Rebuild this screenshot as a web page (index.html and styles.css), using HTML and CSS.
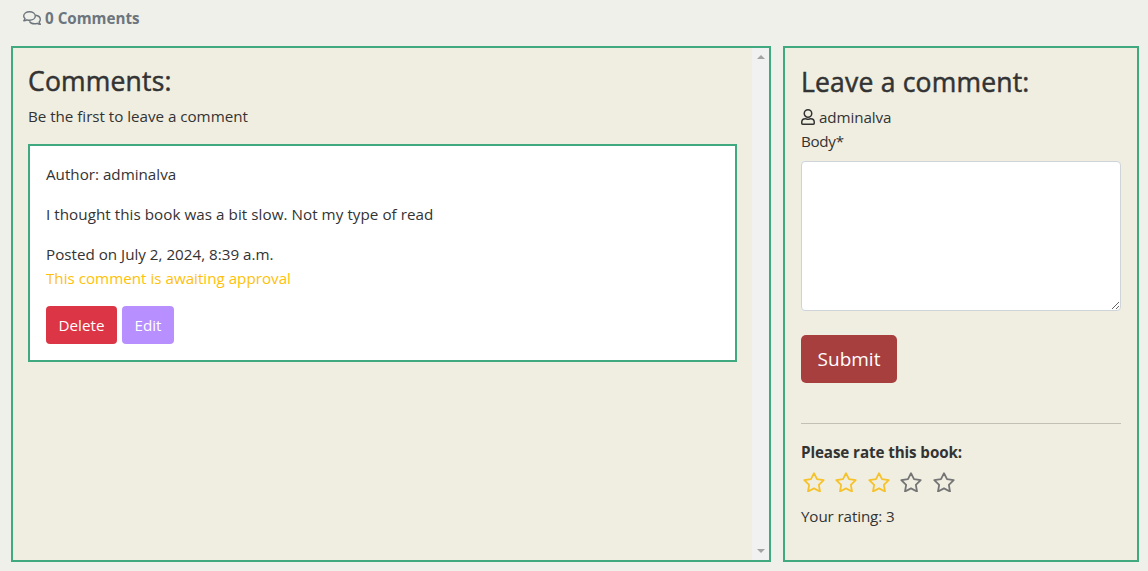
FILE: index.html
```html
<!DOCTYPE html>
<html lang="en">
<head>
<meta charset="utf-8">
<title>Comments</title>
<link rel="stylesheet" href="styles.css">
</head>
<body>
<svg class="defs" aria-hidden="true">
  <symbol id="star" viewBox="0 0 22 20"><path d="M11 1.200l3 6 6.700 1-4.850 4.700 1.150 6.600-6-3.100-6 3.100 1.150-6.600L1.300 8.200l6.700-1z" fill="none" stroke="currentColor" stroke-width="1.800" stroke-linejoin="round"/></symbol>
</svg>
<header class="count">
  <svg class="icon-comments" viewBox="0 0 18 14"><g fill="none" stroke="currentColor" stroke-width="1.400" stroke-linejoin="round"><path d="M6.500.7C9.800.7 12.300 2.600 12.300 5S9.800 9.300 6.500 9.300c-.9 0-1.800-.2-2.600-.5-.9.6-1.900.9-3.100.9.600-.7 1-1.400 1.200-2.200C1.100 6.800.7 5.900.7 5 .7 2.600 3.200.7 6.500.7z"/><path d="M12.500 4.200c2.700.3 4.800 2 4.800 4.300 0 .9-.4 1.800-1.200 2.500.2.800.6 1.500 1.200 2.200-1.200 0-2.200-.3-3.100-.9-.8.300-1.700.5-2.600.5-2.300 0-4.300-1-5.200-2.500"/></g></svg>
  <span class="count-text">0 Comments</span>
</header>
<main class="columns">
  <section class="panel comments">
    <div class="comments-body">
      <h3 class="title">Comments:</h3>
      <p class="intro">Be the first to leave a comment</p>
      <article class="card">
        <p class="para author">Author: adminalva</p>
        <p class="para text">I thought this book was a bit slow. Not my type of read</p>
        <p class="line posted">Posted on July 2, 2024, 8:39 a.m.</p>
        <p class="para awaiting">This comment is awaiting approval</p>
        <div class="actions">
          <button class="btn delete">Delete</button>
          <button class="btn edit">Edit</button>
        </div>
      </article>
    </div>
    <div class="scrollbar"><span class="arrow up"></span><span class="arrow down"></span></div>
  </section>
  <section class="panel form">
    <h3 class="title">Leave a comment:</h3>
    <p class="line user"><svg class="icon-user" viewBox="0 0 14 16"><g fill="none" stroke="currentColor" stroke-width="1.500"><circle cx="7" cy="4.500" r="3.750"/><path d="M4.300 9.700c1 0 1.400.5 2.700.5s1.700-.5 2.700-.5c2 0 3.550 1.500 3.550 3.500v1.100c0 .5-.4.9-.9.9H1.650c-.5 0-.9-.4-.9-.9v-1.100c0-2 1.550-3.500 3.550-3.500z"/></g></svg><span>adminalva</span></p>
    <label class="line label" for="body">Body*</label>
    <textarea class="field" id="body"></textarea>
    <button class="btn submit">Submit</button>
    <hr class="rule">
    <p class="line rate">Please rate this book:</p>
    <div class="stars">
      <svg class="star on"><use href="#star"/></svg>
      <svg class="star on"><use href="#star"/></svg>
      <svg class="star on"><use href="#star"/></svg>
      <svg class="star"><use href="#star"/></svg>
      <svg class="star"><use href="#star"/></svg>
    </div>
    <p class="line rating">Your rating: 3</p>
  </section>
</main>
</body>
</html>
```
FILE: styles.css
```css
* { box-sizing: border-box; }
body {
  margin: 0;
  height: 571px;
  overflow: hidden;
  background: #eff0ea;
  color: #333;
  font-family: "Open Sans", "Noto Sans", sans-serif;
  font-size: 15.2px;
  line-height: 24px;
}
p, h3 { margin: 0; }
.defs { position: absolute; width: 0; height: 0; }
.count {
  display: flex;
  align-items: center;
  gap: 4px;
  height: 46px;
  padding: 0 0 11px 23px;
  color: #6c757d;
  font-weight: 700;
}
.icon-comments { width: 18px; height: 14px; }
.columns {
  display: grid;
  grid-template-columns: 760px 356px;
  gap: 12px;
  height: 516px;
  padding-left: 11px;
}
.panel { height: 516px; border: 2px solid #40a980; background: #f0eee1; }
.comments { display: flex; }
.comments-body { flex: 1; padding: 17px 15px 15px; }
.title {
  margin-bottom: 5px;
  font-size: 26.5px;
  font-weight: 500;
  line-height: 33.6px;
  letter-spacing: 0.2px;
  white-space: nowrap;
  -webkit-text-stroke: 0.5px currentColor;
}
.intro { margin-bottom: 16.400px; letter-spacing: -0.03px; }
.card {
  height: 218px;
  padding: 16px;
  border: 2px solid #40a980;
  background: #fff;
}
.para { margin-bottom: 16px; }
.text { letter-spacing: 0.05px; }
.awaiting { color: #ffc107; }
.actions { display: flex; gap: 5px; }
.btn {
  height: 38px;
  padding: 0;
  border: 0;
  border-radius: 4px;
  color: #fff;
  font: inherit;
}
.delete { width: 71px; background: #dc3545; }
.edit { width: 52px; background: #b78fff; }
.scrollbar {
  display: flex;
  flex-direction: column;
  justify-content: space-between;
  align-items: center;
  width: 17px;
  padding: 7px 0;
  background: #f1f1f1;
}
.arrow { border: 4px solid transparent; }
.up { border-top: 0; border-bottom-color: #a3a3a3; }
.down { border-bottom: 0; border-top-color: #a3a3a3; }
.form { display: flex; flex-direction: column; align-items: flex-start; padding: 18px 16px 16px; }
.user { display: flex; align-items: center; gap: 4px; letter-spacing: -0.1px; }
.icon-user { width: 14px; height: 16px; }
.label { margin-bottom: 8.400px; letter-spacing: -0.3px; }
.field {
  width: 320px;
  height: 150px;
  border: 1px solid #ced4da;
  border-radius: 4px;
  background: #fff;
  resize: vertical;
}
.submit {
  width: 96px;
  height: 48px;
  margin-top: 24px;
  padding-top: 1px;
  border-radius: 5px;
  background: #a83f3f;
  font-size: 19px;
}
.rule {
  width: 320px;
  height: 1px;
  margin: 40px 0 16px;
  border: 0;
  background: #c2c0b5;
}
.rate { font-weight: 700; letter-spacing: -0.1px; }
.stars { display: flex; gap: 10.500px; padding: 8px 0 12px 1.500px; }
.star { width: 22px; height: 20px; color: #757575; }
.on { color: #f6c22c; }
.rating { letter-spacing: -0.12px; }
```
